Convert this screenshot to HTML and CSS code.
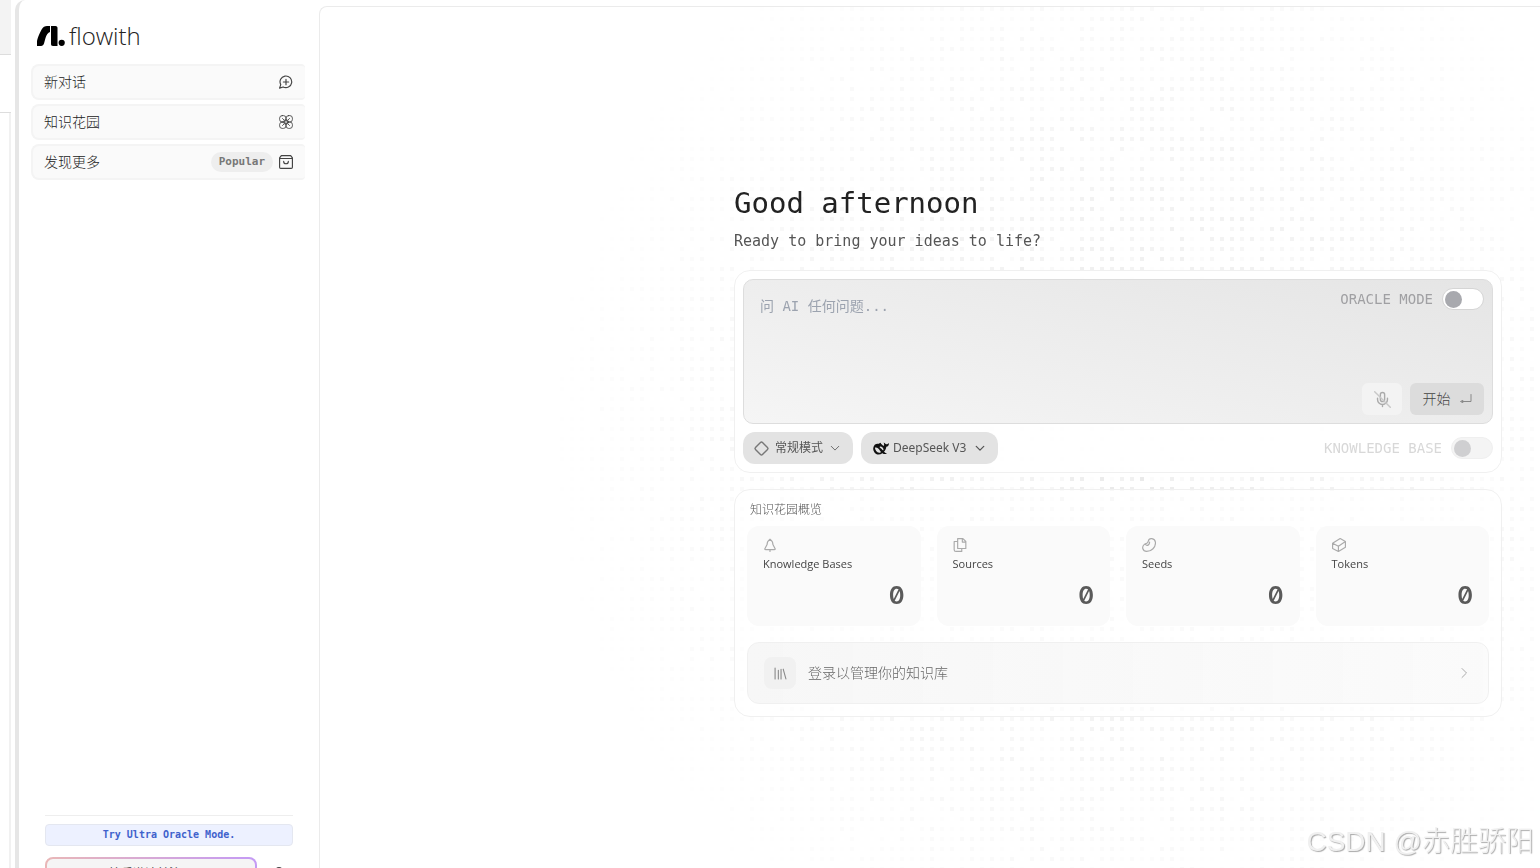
FILE: index.html
```html
<!DOCTYPE html>
<html lang="zh-CN">
<head>
<meta charset="utf-8">
<title>flowith</title>
<link rel="stylesheet" href="styles.css">
</head>
<body>
<div class="edge"><div class="edge-tab"></div><div class="edge-bar"></div><div class="edge-page"></div></div>
<div class="app">
  <aside class="sidebar">
    <a class="logo" href="#" aria-label="flowith">
      <svg class="logo-mark" viewBox="0 0 28 20"><path d="M0 20V15C1 11 4 3 7 .8 8 .2 9 0 10 0H13V6C11 6.500 9.500 8.500 8.500 12L7 17.500C6.500 19 5.500 20 4 20Z"/><path d="M14 0H18.500C20 0 20.500 1 20.500 2V20H16C14.500 20 14 19 14 18Z"/><circle cx="24.700" cy="16.800" r="3.100"/></svg>
      <span class="logo-text">flowith</span>
    </a>
    <nav class="nav">
      <a class="nav-item" href="#"><span>新对话</span>
        <svg class="icon nav-icon" viewBox="0 0 24 24"><path d="M7 20.500A10 10 0 1 0 3 16.500L1 22.500Z"/><path d="M7.500 12h9M12 7.500v9"/></svg></a>
      <a class="nav-item" href="#"><span>知识花园</span>
        <svg class="icon nav-icon thin" viewBox="0 0 24 24"><rect x="1" y="1" width="11" height="11" rx="4.500"/><rect x="12" y="1" width="11" height="11" rx="4.500"/><rect x="1" y="12" width="11" height="11" rx="4.500"/><rect x="12" y="12" width="11" height="11" rx="4.500"/><circle cx="12" cy="12" r="4"/><path d="M6 6l3 3M15 15l3 3M18 6l-3 3M9 15l-3 3"/></svg></a>
      <a class="nav-item" href="#"><span>发现更多</span><span class="badge">Popular</span>
        <svg class="icon nav-icon" viewBox="0 0 24 24"><path d="M4 1h16l3 4v16a2 2 0 0 1-2 2H3a2 2 0 0 1-2-2V5Z"/><path d="M1 6h22M16 11a4 4 0 0 1-8 0"/></svg></a>
    </nav>
    <div class="side-foot">
      <button class="oracle-banner" type="button">Try Ultra Oracle Mode.</button>
      <div class="account">
        <button class="invite" type="button">接受邀请并注册</button>
        <button class="user" type="button" aria-label="账户"><svg class="icon" viewBox="0 0 24 24"><circle cx="12" cy="6" r="5"/><path d="M3 22a9 9 0 0 1 18 0"/></svg></button>
      </div>
    </div>
  </aside>
  <main class="main">
    <canvas class="dots" id="dots"></canvas>
    <div class="content">
      <h1 class="greeting">Good afternoon</h1>
      <p class="tagline">Ready to bring your ideas to life?</p>
      <form class="card composer">
        <div class="prompt">
          <textarea class="prompt-input" aria-label="问 AI 任何问题" placeholder="问 AI 任何问题..."></textarea>
          <div class="prompt-side">
            <label class="switch-label">ORACLE MODE <input class="switch" type="checkbox"></label>
            <div class="actions">
              <button class="mic" type="button" aria-label="语音"><svg class="icon" viewBox="0 0 24 24"><rect x="9" y="2" width="6" height="13" rx="3"/><path d="M5 10v2a7 7 0 0 0 14 0v-2M12 19v3"/><path class="mute" d="M1 1l22 22"/></svg></button>
              <button class="send" type="button">开始 <svg class="icon" viewBox="0 0 24 24"><path d="M22 3v14H4"/><path d="M5 15l-4 2 4 2Z"/></svg></button>
            </div>
          </div>
        </div>
        <div class="tools">
          <label class="pill">
            <svg class="icon pill-icon" viewBox="0 0 24 24"><rect x="5" y="5" width="14" height="14" rx="2" transform="rotate(45 12 12)"/></svg>
            <select class="pill-select" aria-label="模式"><option>常规模式</option></select>
            <svg class="icon chevron" viewBox="0 0 24 24"><path d="M3 8l9 9 9-9"/></svg>
          </label>
          <label class="pill">
            <svg class="whale" viewBox="0 0 48 38"><path fill-rule="evenodd" d="M1 17C2 9 8 4 16 5C19 5 20 3 23 2C24 6 27 8 31 11C34 12 34 6 32 1C36 2 37 6 40 6C43 6 45 4 48 3C48 9 45 13 40 14C39 20 37 25 33 29C36 32 39 34 42 35C36 37 31 35 28 33C20 39 9 38 4 30C1 26 0 22 1 17ZM6 16C6 23 11 31 19 32C23 32 25 29 21 26C18 19 13 15 6 16ZM22 13C18 14 20 17 24 19C28 21 27 25 31 24C33 20 28 13 22 13Z"/></svg>
            <select class="pill-select" aria-label="模型"><option>DeepSeek V3</option></select>
            <svg class="icon chevron dark" viewBox="0 0 24 24"><path d="M3 8l9 9 9-9"/></svg>
          </label>
          <label class="switch-label muted">KNOWLEDGE BASE <input class="switch" type="checkbox"></label>
        </div>
      </form>
      <section class="card garden">
        <h2 class="garden-title">知识花园概览</h2>
        <div class="stats">
          <div class="stat"><svg class="icon stat-icon" viewBox="0 0 24 24"><path d="M12 2C9 4 7 7 7 11l-4 8c0 1 1 1 2 1h14c1 0 2 0 2-1l-4-8C17 7 15 4 12 2ZM12 20v3"/></svg><span class="stat-name">Knowledge Bases</span><strong class="stat-value">0</strong></div>
          <div class="stat"><svg class="icon stat-icon" viewBox="0 0 24 24"><path d="M8 1h9l5 5v12H8ZM16 1v6h6M8 6H2v14a3 3 0 0 0 3 3h10v-5"/></svg><span class="stat-name">Sources</span><strong class="stat-value">0</strong></div>
          <div class="stat"><svg class="icon stat-icon" viewBox="0 0 24 24"><path d="M11 5c1-6 11-5 12 2C24 16 16 23 8 23 1 23-1 15 4 11c3-2 6 0 7-6Z"/><path d="M6 10c0 4 7 4 7-3"/></svg><span class="stat-name">Seeds</span><strong class="stat-value">0</strong></div>
          <div class="stat"><svg class="icon stat-icon" viewBox="0 0 24 24"><path d="M14 1 23 6v10l-12 7-10-5V9ZM1 9l10 5 12-8M11 14v9"/></svg><span class="stat-name">Tokens</span><strong class="stat-value">0</strong></div>
        </div>
        <a class="login" href="#">
          <span class="login-icon"><svg class="icon" viewBox="0 0 24 24"><path d="M2 2v20M8 6v16M13 4v18M17 4l5 18"/></svg></span>
          <span class="login-text">登录以管理你的知识库</span>
          <svg class="icon arrow" viewBox="0 0 24 24"><path d="M8 3l9 9-9 9"/></svg>
        </a>
      </section>
    </div>
  </main>
</div>
<div class="watermark">CSDN @赤胜骄阳</div>
<script src="dots.js"></script>
</body>
</html>
```
FILE: styles.css
```css
* { box-sizing: border-box; }
body {
  --mono: "DejaVu Sans Mono", "Noto Sans CJK SC", monospace;
  --sans: "Noto Sans", "Noto Sans CJK SC", sans-serif;
  margin: 0;
  height: 100vh;
  overflow: hidden;
  display: flex;
  background: #fff;
  color: #444;
  font: 14px/20px var(--sans);
}
button, select, textarea { font: inherit; color: inherit; border: 0; margin: 0; }
a { color: inherit; text-decoration: none; }
.icon { width: 14px; height: 14px; flex: none; fill: none; stroke: currentColor; stroke-width: 2; stroke-linecap: round; stroke-linejoin: round; }

.edge { flex: none; width: 15px; padding-right: 4px; display: flex; flex-direction: column; }
.edge-tab { height: 55px; background: #f3f3f3; border-bottom: 1px solid #ddd; }
.edge-bar { height: 58px; border-bottom: 1px solid #ddd; }
.edge-page { flex: 1; border-right: 2px solid #f1f1f1; }

.app { flex: 1; min-width: 0; display: flex; border-left: 4px solid #e6e6e6; border-top-left-radius: 10px; }
.sidebar { flex: none; width: 300px; height: calc(100vh + 36px); padding: 24px 14px 14px 12px; display: flex; flex-direction: column; }
.logo { display: flex; align-items: center; gap: 4px; height: 24px; padding-left: 6px; color: #222; }
.logo-mark { width: 28px; height: 20px; fill: #000; }
.logo-text { font: 300 24px/24px "Open Sans", sans-serif; }
.nav { display: grid; gap: 4px; margin-top: 16px; }
.nav-item { display: flex; align-items: center; gap: 6px; height: 36px; padding: 0 11px; background: #fafafa; border: 2px solid #f4f4f4; border-right: 0; border-radius: 8px 4px 4px 8px; color: #222; font-weight: 300; }
.nav-item > :first-child { flex: 1; }
.badge { padding: 0 8px; border-radius: 10px; background: #eee; color: #777; font: 700 11px/20px var(--mono); }
.nav-icon { margin-right: 1px; color: #444; }
.nav-icon.thin { stroke-width: 1.500; }
.side-foot { margin: auto 12px 0 14px; padding-top: 8px; border-top: 1px solid #eee; }
.oracle-banner { display: block; width: 100%; height: 22px; padding: 0; border: 1px solid #e4e7f0; border-radius: 4px; background: #edf1ff; color: #4061cc; font: 700 10px/18px var(--mono); }
.account { display: flex; align-items: center; gap: 15px; margin-top: 11px; }
.invite { width: 212px; height: 33px; border: 2px solid transparent; border-radius: 8px; background: linear-gradient(#f5f5f5, #f5f5f5) padding-box, linear-gradient(90deg, #e9b7b7, #c49af5) border-box; font-size: 12px; line-height: 16px; }
.user { padding: 0; background: none; display: flex; }

.main { flex: 1; min-width: 0; margin-top: 6px; position: relative; border: 1px solid #ebebeb; border-width: 1px 0 0 1px; border-top-left-radius: 8px; overflow: hidden; }
.dots { position: absolute; inset: 0; width: 100%; height: 100%; }
.content { position: relative; width: 768px; max-width: calc(100% - 76px); margin: 176px 38px 0 auto; }
.greeting { margin: 0; font: 400 29px/40px var(--mono); color: #222; }
.tagline { margin: 8px 0 0; font: 15px/20px var(--mono); color: #555; }
.card { border: 1px solid #f0f0f0; border-radius: 16px; }
.composer { margin-top: 19px; padding: 8px; background: #fffffff0; }
.prompt { display: flex; height: 145px; border: 1px solid #ddd; border-radius: 10px; background: linear-gradient(12deg, #f5f5f5, #e5e5e5); }
.prompt-input { flex: 1; min-width: 0; padding: 16px; resize: none; background: none; outline: 0; font: 14px/20px var(--mono); }
.prompt-input::placeholder { color: #9ca3af; opacity: 1; }
.prompt-side { display: flex; flex-direction: column; justify-content: space-between; align-items: flex-end; padding: 8px; }
.switch-label { display: flex; align-items: center; gap: 9px; font: 14px/20px var(--mono); color: #a0a0a3; }
.switch { appearance: none; margin: 0; width: 42px; height: 22px; padding: 2px; border: 1px solid #d5d5d5; border-radius: 11px; background: #fff; }
.switch::before { content: ""; display: block; width: 17px; height: 17px; border-radius: 50%; background: #a8a9ae; }
.actions { display: flex; gap: 8px; }
.mic, .send { display: flex; align-items: center; justify-content: center; height: 32px; border-radius: 6px; }
.mic { width: 40px; padding: 0; background: #f3f3f3; color: #aaa; }
.mic .icon { width: 17px; height: 17px; }
.mute { stroke: #c8c8c8; }
.send { gap: 9px; width: 74px; padding: 0; background: #dcdcdc; color: #444; font-weight: 300; }
.send .icon { width: 12px; height: 12px; color: #888; }
.tools { display: flex; gap: 8px; margin-top: 8px; }
.pill { display: flex; align-items: center; height: 32px; padding: 0 13px 0 10px; border-radius: 12px; background: #e3e3e3; color: #555; }
.pill-icon { width: 17px; height: 17px; margin-right: 5px; color: #777; }
.pill-select { appearance: none; padding: 0; background: none; font: 12px/20px var(--sans); }
.chevron { width: 10px; height: 10px; margin-left: 6px; }
.chevron.dark { stroke-width: 3; margin-left: 8px; }
.whale { width: 16px; height: 13px; margin: 0 4px 0 2px; fill: #111; }
.switch-label.muted { margin-left: auto; color: #d8d8d8; }
.muted .switch { border-color: #efefef; background: #f4f4f4; }
.muted .switch::before { background: #cfcfd1; }

.garden { margin-top: 16px; padding: 10px 12px 12px; background: #ffffffa8; }
.garden-title { margin: 0 3px; font: 300 12px/20px var(--sans); color: #555; }
.stats { display: grid; grid-template-columns: repeat(4, 1fr); gap: 16px; margin-top: 6px; }
.stat { display: flex; flex-direction: column; height: 100px; padding: 12px 16px; border-radius: 12px; background: #fafafa; }
.stat-icon { color: #aaa; }
.stat-name { font: 11px/16px "Open Sans", sans-serif; margin-top: 4px; color: #444; }
.stat-value { align-self: flex-end; margin-top: 8px; font: 600 24px/32px Inter, sans-serif; font-feature-settings: "zero"; color: #5a5a5a; }
.login { display: flex; align-items: center; height: 62px; margin-top: 16px; padding: 0 18px 0 16px; border: 1px solid #f0f0f0; border-radius: 12px; background: linear-gradient(90deg, #f7f7f7, #fafafae0); color: #666; }
.login-icon { display: grid; place-items: center; width: 32px; height: 32px; margin-right: 12px; border-radius: 8px; background: #f1f1f1; }
.login-icon .icon { width: 13px; height: 13px; color: #888; }
.login-text { flex: 1; font-weight: 300; }
.arrow { width: 12px; height: 12px; color: #aaa; }

.watermark { position: absolute; right: 6px; bottom: 6px; font: 28px/40px "Liberation Sans", "Noto Sans CJK SC", sans-serif; font-weight: 300; color: #f0f0f0; text-shadow: 1px 1px 1px #aaa; }
```
FILE: dots.js
```js
const canvas = document.getElementById("dots");
const box = canvas.getBoundingClientRect();
canvas.width = Math.round(box.width);
canvas.height = Math.round(box.height);
const ctx = canvas.getContext("2d");
let seed = 7;
const random = () => {
  seed = (seed * 16807) % 2147483647;
  return seed / 2147483647;
};
const cx = 798, cy = 427, radius = 580;
for (let y = 0; y < canvas.height; y += 10) {
  for (let x = 0; x < canvas.width; x += 10) {
    const fade = Math.max(0, 1 - Math.hypot(x - cx, y - cy) / radius);
    ctx.fillStyle = `rgba(0,0,0,${0.095 * fade * random()})`;
    ctx.fillRect(x, y, 4, 4);
  }
}
```
